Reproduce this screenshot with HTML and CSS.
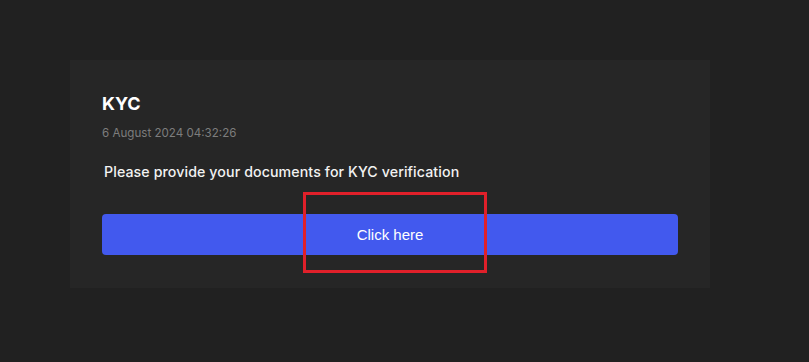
FILE: index.html
```html
<!DOCTYPE html>
<html>
<head>
<meta charset="utf-8">
<link rel="stylesheet" href="styles.css">
</head>
<body>
<div class="page">
  <div class="card">
    <h1 class="title">KYC</h1>
    <div class="date">6 August 2024 04:32:26</div>
    <p class="msg">Please provide your documents for KYC verification</p>
    <button class="btn">Click here</button>
  </div>
  <div class="highlight"></div>
</div>
</body>
</html>
```
FILE: styles.css
```css
html, body {
  margin: 0;
  padding: 0;
  background: #212121;
}
.page {
  position: relative;
  width: 809px;
  height: 362px;
  padding: 60px 0 0 70px;
  box-sizing: border-box;
}
.card {
  width: 640px;
  height: 228px;
  box-sizing: border-box;
  background: #262626;
  padding: 32px 32px 0 32px;
  display: flex;
  flex-direction: column;
}
.title {
  margin: 0;
  font-family: Inter, sans-serif;
  font-weight: 700;
  font-size: 18px;
  line-height: 24px;
  color: #ffffff;
}
.date {
  margin-top: 9px;
  font-family: Inter, sans-serif;
  font-size: 11.6px;
  line-height: 16px;
  color: #7d7d7d;
}
.msg {
  margin: 22px 0 0 2px;
  font-family: Inter, sans-serif;
  font-weight: 500;
  font-size: 14.2px;
  letter-spacing: 0.1px;
  line-height: 18px;
  color: #f2f2f2;
}
.btn {
  margin-top: 33px;
  width: 576px;
  height: 41px;
  border: none;
  border-radius: 4px;
  background: #4259ee;
  color: #ffffff;
  font-family: "Liberation Sans", Arial, sans-serif;
  font-size: 15px;
}
.highlight {
  position: absolute;
  left: 303px;
  top: 192px;
  width: 184px;
  height: 81px;
  box-sizing: border-box;
  border: 3px solid #e0202a;
}
```
